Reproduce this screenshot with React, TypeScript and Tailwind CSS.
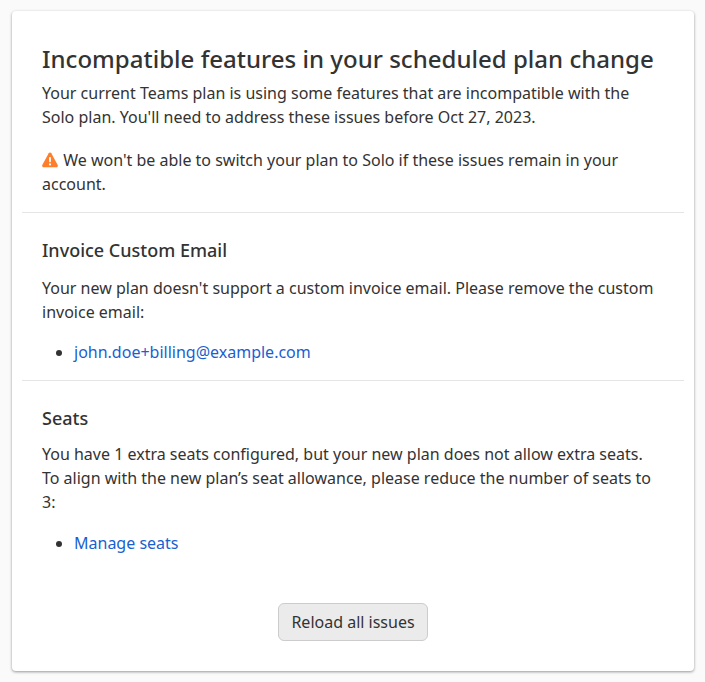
function WarningIcon() {
  return (
    <svg viewBox="0 0 16 16" className="inline-block w-4 h-4 mr-[1px] align-[-2px]">
      <path
        fill="#fd7e2b"
        d="M6.7 1.2c.6-1 2-1 2.6 0l6.4 11.9c.5 1-.2 2.2-1.3 2.2H1.6c-1.1 0-1.8-1.2-1.3-2.2L6.7 1.2z"
      />
      <rect x="7.1" y="5" width="1.8" height="5.2" rx=".7" fill="#fff" />
      <circle cx="8" cy="12.4" r="1.05" fill="#fff" />
    </svg>
  );
}

export default function App() {
  return (
    <div className="min-h-[682px] bg-[#fafafa] px-3 pt-[11px] font-['Noto_Sans',sans-serif] text-[16px] leading-6 text-[#333333]">
      <div className="w-[682px] h-[660px] bg-white rounded shadow-[0_1px_3px_rgba(0,0,0,0.4)] px-[10px] pt-[10px] flex flex-col">
        <section className="px-5 pt-5 pb-4 border-b border-[#e5e5e5]">
          <h1 className="text-[24px] leading-[36px] font-medium tracking-[0.02px]">Incompatible features in your scheduled plan change</h1>
          <p className="mt-1">
            Your current Teams plan is using some features that are incompatible with the Solo plan. You'll need to address these issues before Oct 27, 2023.
          </p>
          <p className="mt-[19px]">
            <WarningIcon /> We won't be able to switch your plan to Solo if these issues remain in your account.
          </p>
        </section>
        <section className="px-5 pt-6 pb-4 border-b border-[#e5e5e5]">
          <h2 className="text-[18px] leading-[27px] font-medium">Invoice Custom Email</h2>
          <p className="mt-3">
            Your new plan doesn't support a custom invoice email. Please remove the custom invoice email:
          </p>
          <ul className="mt-4 list-disc pl-8">
            <li><a href="#" className="text-[#1a5fd0]">john.doe+billing@example.com</a></li>
          </ul>
        </section>
        <section className="px-5 pt-6">
          <h2 className="text-[18px] leading-[27px] font-medium">Seats</h2>
          <p className="mt-[10px]">
            You have 1 extra seats configured, but your new plan does not allow extra seats. To align with the new plan’s seat allowance, please reduce the number of seats to 3:
          </p>
          <ul className="mt-[17px] list-disc pl-8">
            <li><a href="#" className="text-[#1a5fd0]">Manage seats</a></li>
          </ul>
        </section>
        <div className="flex justify-center mt-[48px]">
          <button className="h-[38px] px-3 rounded-md border border-[#cccccc] bg-[#ebebeb] text-[#333333]">Reload all issues</button>
        </div>
      </div>
    </div>
  );
}
